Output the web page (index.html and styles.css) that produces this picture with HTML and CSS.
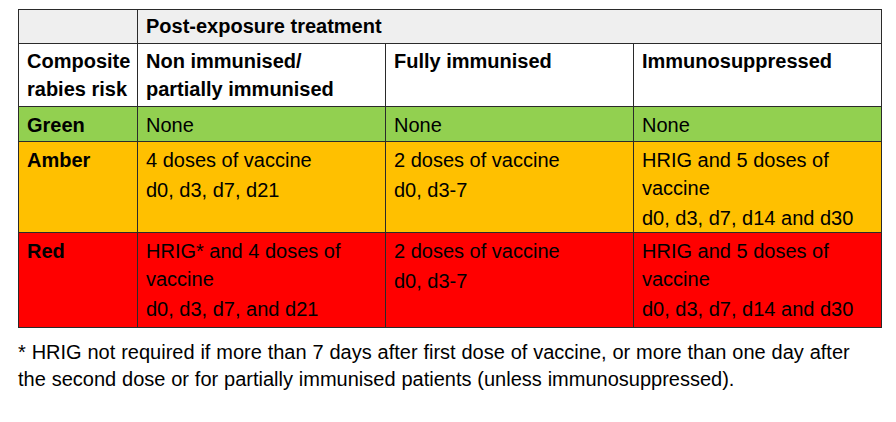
FILE: index.html
```html
<!DOCTYPE html>
<html>
<head>
<meta charset="utf-8">
<link rel="stylesheet" href="styles.css">
</head>
<body>
<div class="page">
  <table class="risk">
    <colgroup>
      <col class="c1"><col class="c2"><col class="c2"><col class="c2">
    </colgroup>
    <tr class="r-h1">
      <td class="grey"></td>
      <td class="grey b" colspan="3">Post-exposure treatment</td>
    </tr>
    <tr class="r-h2">
      <td class="b">Composite rabies risk</td>
      <td class="b">Non immunised/ partially immunised</td>
      <td class="b">Fully immunised</td>
      <td class="b">Immunosuppressed</td>
    </tr>
    <tr class="r-green green">
      <td class="b">Green</td>
      <td>None</td>
      <td>None</td>
      <td>None</td>
    </tr>
    <tr class="r-amber amber">
      <td class="b">Amber</td>
      <td><p>4 doses of vaccine</p><p>d0, d3, d7, d21</p></td>
      <td><p>2 doses of vaccine</p><p>d0, d3-7</p></td>
      <td><p>HRIG and 5 doses of vaccine</p><p>d0, d3, d7, d14 and d30</p></td>
    </tr>
    <tr class="r-red red">
      <td class="b">Red</td>
      <td><p>HRIG* and 4 doses of vaccine</p><p>d0, d3, d7, and d21</p></td>
      <td><p>2 doses of vaccine</p><p>d0, d3-7</p></td>
      <td><p>HRIG and 5 doses of vaccine</p><p>d0, d3, d7, d14 and d30</p></td>
    </tr>
  </table>
  <p class="note">* HRIG not required if more than 7 days after first dose of vaccine, or more than one day after the second dose or for partially immunised patients (unless immunosuppressed).</p>
</div>
</body>
</html>
```

FILE: styles.css
```css
html, body {
  margin: 0;
  padding: 0;
  background: #ffffff;
}
body {
  font-family: "Liberation Sans", Arial, sans-serif;
  color: #000;
}
.page {
  padding: 9px 0 0 18px;
}
.risk {
  border-collapse: collapse;
  table-layout: fixed;
  width: 864px;
  font-size: 20px;
  line-height: 28px;
  border: 1px solid #6a6a6a;
}
.c1 { width: 119px; }
.c2 { width: 248px; }
.risk td {
  border: 1px solid #2a2a2a;
  vertical-align: top;
  padding: 4px 7px 0 8px;
  box-sizing: border-box;
}
.risk p {
  margin: 0;
}
.risk p + p {
  margin-top: 2px;
}
.b { font-weight: bold; }
.grey { background: #efefef; }
.green td { background: #92d050; }
.amber td { background: #ffc000; }
.red td { background: #ff0000; }
.r-h1 { height: 34px; }
.r-h1 td { padding-top: 2px; }
.r-h2 { height: 63px; }
.r-h2 td { padding-top: 3px; }
.r-green { height: 35px; }
.r-amber { height: 91px; }
.r-red { height: 95px; }
.note {
  margin: 11px 0 0 0;
  font-size: 20px;
  line-height: 27px;
  width: 848px;
  word-spacing: 0.3px;
}
```
